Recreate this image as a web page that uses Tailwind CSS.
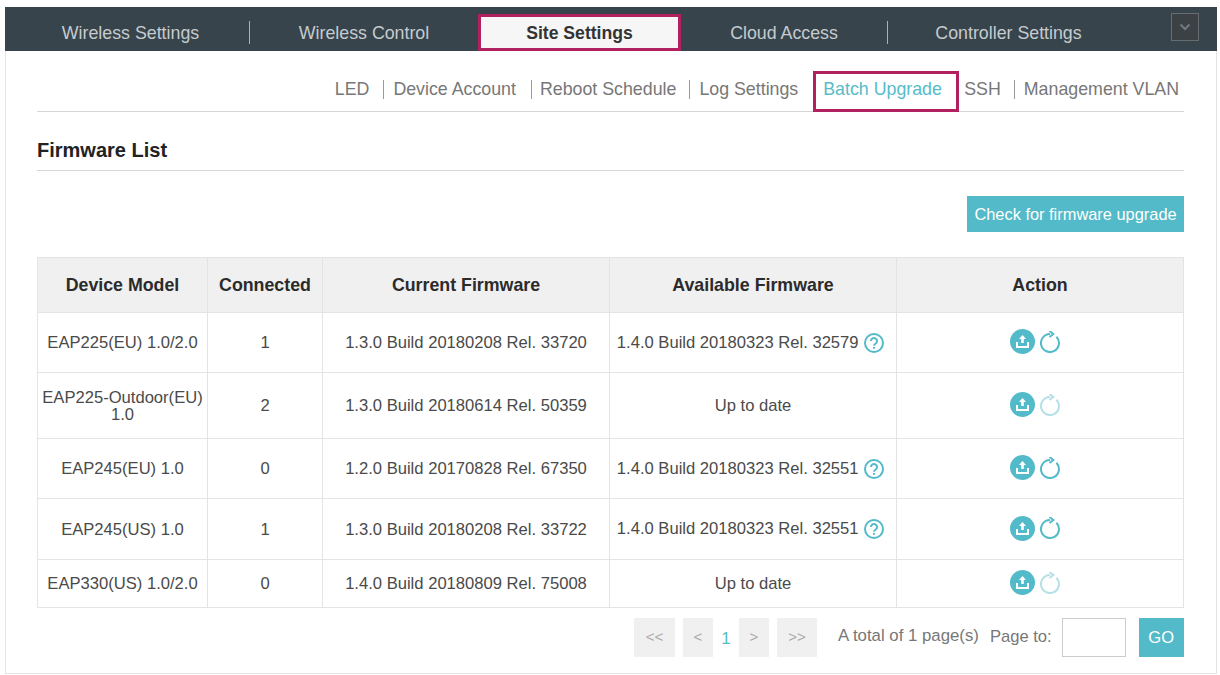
<!DOCTYPE html>
<html><head><meta charset="utf-8"><script src="https://cdn.jsdelivr.net/npm/@tailwindcss/browser@4"></script></head>
<body class="bg-white overflow-hidden">
<div class="w-[1220px] h-[675px] pt-[7px] pl-[5px] pr-[3px] font-['Liberation_Sans',Arial,sans-serif]">
<div class="h-[667px] border border-t-0 border-[#e4e4e4] relative">
  <nav class="h-[44px] bg-[#37444c] -ml-px -mr-px flex items-end text-[17.8px] text-[#c5cbce]">
    <div class="w-[244px] h-full flex items-center justify-center pt-[8px] pl-[7px]">Wireless Settings</div>
    <div class="w-px h-[23px] bg-[#aab2b6] self-center mt-[6px]"></div>
    <div class="w-[228px] h-full flex items-center justify-center pt-[8px]">Wireless Control</div>
    <div class="w-[203px] h-[37px] border-[3px] border-[#b2215f] bg-[#f6f6f6] flex items-center justify-center font-bold text-[17.6px] text-[#333] pt-[2px]">Site Settings</div>
    <div class="w-[206px] h-full flex items-center justify-center pt-[8px]">Cloud Access</div>
    <div class="w-px h-[23px] bg-[#aab2b6] self-center mt-[6px]"></div>
    <div class="w-[241px] h-full flex items-center justify-center pt-[8px]">Controller Settings</div>
    <div class="self-start mt-[6px] ml-[42px] w-[28px] h-[28px] border-[1.5px] border-[#666d71] bg-[#3c4145] flex items-center justify-center">
      <svg width="12" height="8" viewBox="0 0 12 8" fill="none" stroke="#707a7f" stroke-width="2"><path d="M1.500 1.500 6 6l4.500-4.500"/></svg>
    </div>
  </nav>

  <div class="ml-[31px] mr-[32px] h-[61px] border-b border-[#d6d6d6] flex items-end justify-end text-[17.8px] leading-[20px] text-[#777]">
    <span class="mb-[12px] whitespace-nowrap">LED</span>
    <span class="w-px h-[19px] bg-[#999] ml-[14px] mr-[9px] mb-[12px]"></span>
    <span class="mb-[12px] whitespace-nowrap">Device Account</span>
    <span class="w-px h-[19px] bg-[#999] ml-[15px] mr-[8px] mb-[12px]"></span>
    <span class="mb-[12px] whitespace-nowrap">Reboot Schedule</span>
    <span class="w-px h-[19px] bg-[#999] ml-[13px] mr-[9px] mb-[12px]"></span>
    <span class="mb-[12px] whitespace-nowrap">Log Settings</span>
    <span class="ml-[15px] w-[146px] h-[41px] -mb-px border-[3px] border-[#b2215f] flex items-center pl-[7px] pb-[5px] whitespace-nowrap text-[#58bcc9]">Batch Upgrade</span>
    <span class="ml-[5px] mb-[12px]">SSH</span>
    <span class="w-px h-[19px] bg-[#999] ml-[13px] mr-[9px] mb-[12px]"></span>
    <span class="mb-[12px] mr-[5px] whitespace-nowrap">Management VLAN</span>
  </div>

  <div class="ml-[31px] mr-[32px] h-[59px] border-b border-[#d6d6d6] flex items-end pb-[10px] text-[20px] font-bold text-[#222] leading-[20px]">Firmware List</div>

  <div class="ml-[31px] mr-[32px] mt-[25px] flex justify-end">
    <button class="w-[217px] h-[36px] bg-[#52bac8] text-white text-[16.4px] whitespace-nowrap">Check for firmware upgrade</button>
  </div>

  <table class="ml-[31px] mt-[25px] w-[1146px] table-fixed border-collapse text-[16.6px] text-[#4a4a4a] text-center leading-[17px]">
    <colgroup><col class="w-[170px]"><col class="w-[115px]"><col class="w-[287px]"><col class="w-[287px]"><col class="w-[287px]"></colgroup>
    <thead>
      <tr class="h-[55px] bg-[#f0f0f0] text-[#2b2b2b] text-[17.8px] font-bold">
        <th class="border border-[#e4e4e4]">Device Model</th><th class="border border-[#e4e4e4]">Connected</th><th class="border border-[#e4e4e4]">Current Firmware</th><th class="border border-[#e4e4e4]">Available Firmware</th><th class="border border-[#e4e4e4]">Action</th>
      </tr>
    </thead>
    <tbody>
      <tr class="h-[60px]">
        <td class="border border-[#e4e4e4]">EAP225(EU) 1.0/2.0</td><td class="border border-[#e4e4e4]">1</td><td class="border border-[#e4e4e4]">1.3.0 Build 20180208 Rel. 33720</td>
        <td class="border border-[#e4e4e4] whitespace-nowrap pr-[5px]">1.4.0 Build 20180323 Rel. 32579 <svg class="inline align-[-5px] ml-px" width="20" height="20" viewBox="0 0 20 20" fill="none" stroke="#52bac8" stroke-width="2"><circle cx="10" cy="10" r="9"/><path d="M7 8a3 3 0 1 1 4.700 2.500c-1.100.7-1.700 1.200-1.700 2.300"/><path d="M10 14v1.800"/></svg></td>
        <td class="border border-[#e4e4e4]"><div class="flex justify-center items-center gap-[5px] pr-[11px] -mt-[2px]"><svg width="25" height="25" viewBox="0 0 25 25"><circle cx="12.500" cy="12.500" r="12.500" fill="#52bac8"/><path d="M12.500 6l-3.500 4h2.200v4h2.600v-4H16z" fill="#fff"/><path d="M7 13v5h11v-5" fill="none" stroke="#fff" stroke-width="2"/></svg><svg width="20" height="22" viewBox="0 0 20 22" fill="none" stroke="#52bac8" stroke-width="2"><path d="M16.400 5.700A9 9 0 1 1 10 3"/><path d="M9.500 0l3.800 3-3.800 3"/></svg></div></td>
      </tr>
      <tr class="h-[66px]">
        <td class="border border-[#e4e4e4]">EAP225-Outdoor(EU)<br>1.0</td><td class="border border-[#e4e4e4]">2</td><td class="border border-[#e4e4e4]">1.3.0 Build 20180614 Rel. 50359</td>
        <td class="border border-[#e4e4e4]">Up to date</td>
        <td class="border border-[#e4e4e4]"><div class="flex justify-center items-center gap-[5px] pr-[11px] -mt-[2px]"><svg width="25" height="25" viewBox="0 0 25 25"><circle cx="12.500" cy="12.500" r="12.500" fill="#52bac8"/><path d="M12.500 6l-3.500 4h2.200v4h2.600v-4H16z" fill="#fff"/><path d="M7 13v5h11v-5" fill="none" stroke="#fff" stroke-width="2"/></svg><svg width="20" height="22" viewBox="0 0 20 22" fill="none" stroke="#b4e0e6" stroke-width="2"><path d="M16.400 5.700A9 9 0 1 1 10 3"/><path d="M9.500 0l3.800 3-3.800 3"/></svg></div></td>
      </tr>
      <tr class="h-[60px]">
        <td class="border border-[#e4e4e4]">EAP245(EU) 1.0</td><td class="border border-[#e4e4e4]">0</td><td class="border border-[#e4e4e4]">1.2.0 Build 20170828 Rel. 67350</td>
        <td class="border border-[#e4e4e4] whitespace-nowrap pr-[5px]">1.4.0 Build 20180323 Rel. 32551 <svg class="inline align-[-5px] ml-px" width="20" height="20" viewBox="0 0 20 20" fill="none" stroke="#52bac8" stroke-width="2"><circle cx="10" cy="10" r="9"/><path d="M7 8a3 3 0 1 1 4.700 2.500c-1.100.7-1.700 1.200-1.700 2.300"/><path d="M10 14v1.800"/></svg></td>
        <td class="border border-[#e4e4e4]"><div class="flex justify-center items-center gap-[5px] pr-[11px] -mt-[2px]"><svg width="25" height="25" viewBox="0 0 25 25"><circle cx="12.500" cy="12.500" r="12.500" fill="#52bac8"/><path d="M12.500 6l-3.500 4h2.200v4h2.600v-4H16z" fill="#fff"/><path d="M7 13v5h11v-5" fill="none" stroke="#fff" stroke-width="2"/></svg><svg width="20" height="22" viewBox="0 0 20 22" fill="none" stroke="#52bac8" stroke-width="2"><path d="M16.400 5.700A9 9 0 1 1 10 3"/><path d="M9.500 0l3.800 3-3.800 3"/></svg></div></td>
      </tr>
      <tr class="h-[61px]">
        <td class="border border-[#e4e4e4]">EAP245(US) 1.0</td><td class="border border-[#e4e4e4]">1</td><td class="border border-[#e4e4e4]">1.3.0 Build 20180208 Rel. 33722</td>
        <td class="border border-[#e4e4e4] whitespace-nowrap pr-[5px]">1.4.0 Build 20180323 Rel. 32551 <svg class="inline align-[-5px] ml-px" width="20" height="20" viewBox="0 0 20 20" fill="none" stroke="#52bac8" stroke-width="2"><circle cx="10" cy="10" r="9"/><path d="M7 8a3 3 0 1 1 4.700 2.500c-1.100.7-1.700 1.200-1.700 2.300"/><path d="M10 14v1.800"/></svg></td>
        <td class="border border-[#e4e4e4]"><div class="flex justify-center items-center gap-[5px] pr-[11px] -mt-[2px]"><svg width="25" height="25" viewBox="0 0 25 25"><circle cx="12.500" cy="12.500" r="12.500" fill="#52bac8"/><path d="M12.500 6l-3.500 4h2.200v4h2.600v-4H16z" fill="#fff"/><path d="M7 13v5h11v-5" fill="none" stroke="#fff" stroke-width="2"/></svg><svg width="20" height="22" viewBox="0 0 20 22" fill="none" stroke="#52bac8" stroke-width="2"><path d="M16.400 5.700A9 9 0 1 1 10 3"/><path d="M9.500 0l3.800 3-3.800 3"/></svg></div></td>
      </tr>
      <tr class="h-[48px]">
        <td class="border border-[#e4e4e4]">EAP330(US) 1.0/2.0</td><td class="border border-[#e4e4e4]">0</td><td class="border border-[#e4e4e4]">1.4.0 Build 20180809 Rel. 75008</td>
        <td class="border border-[#e4e4e4]">Up to date</td>
        <td class="border border-[#e4e4e4]"><div class="flex justify-center items-center gap-[5px] pr-[11px] -mt-[2px]"><svg width="25" height="25" viewBox="0 0 25 25"><circle cx="12.500" cy="12.500" r="12.500" fill="#52bac8"/><path d="M12.500 6l-3.500 4h2.200v4h2.600v-4H16z" fill="#fff"/><path d="M7 13v5h11v-5" fill="none" stroke="#fff" stroke-width="2"/></svg><svg width="20" height="22" viewBox="0 0 20 22" fill="none" stroke="#b4e0e6" stroke-width="2"><path d="M16.400 5.700A9 9 0 1 1 10 3"/><path d="M9.500 0l3.800 3-3.800 3"/></svg></div></td>
      </tr>
    </tbody>
  </table>

  <div class="ml-[628px] mt-[10px] w-[550px] h-[39px] flex items-center text-[15px] text-[#777]">
    <span class="shrink-0 w-[41px] h-full bg-[#f0f0f0] text-[#aaa] flex items-center justify-center">&lt;&lt;</span>
    <span class="shrink-0 ml-[8px] w-[30px] h-full bg-[#f0f0f0] text-[#aaa] flex items-center justify-center">&lt;</span>
    <span class="shrink-0 w-[26px] text-center text-[#58bcc9] text-[17px] pt-[2px]">1</span>
    <span class="shrink-0 w-[30px] h-full bg-[#f0f0f0] text-[#aaa] flex items-center justify-center">&gt;</span>
    <span class="shrink-0 ml-[8px] w-[40px] h-full bg-[#f0f0f0] text-[#aaa] flex items-center justify-center">&gt;&gt;</span>
    <span class="shrink-0 ml-[21px] text-[16.8px] pb-[4px] whitespace-nowrap">A total of 1 page(s)</span>
    <span class="shrink-0 ml-[11px] text-[16.6px] whitespace-nowrap">Page to:</span>
    <input class="shrink-0 ml-[10px] w-[64px] h-full border border-[#ccc] bg-white">
    <span class="shrink-0 ml-[13px] w-[45px] h-full bg-[#52bac8] text-white flex items-center justify-center text-[16.5px]">GO</span>
  </div>
</div>
</div>
</body></html>
